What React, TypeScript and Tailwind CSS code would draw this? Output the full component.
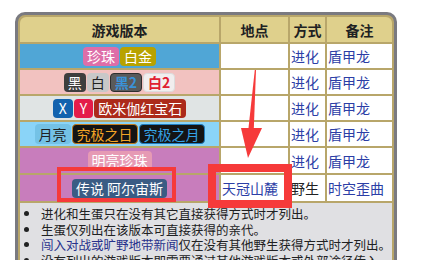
import React from 'react';

const Badge: React.FC<{ className: string; children: React.ReactNode }> = ({ className, children }) => (
  <span className={`inline-flex h-[19px] items-center rounded-[4px] leading-[19px] ${className}`}>{children}</span>
);

const Row: React.FC<{ bg: string; h?: string; children: React.ReactNode; place?: React.ReactNode; method: string; methodLink?: boolean; note: string }> = ({
  bg,
  h = 'h-[24px]',
  children,
  place,
  method,
  methodLink = true,
  note,
}) => (
  <>
    <div className={`${bg} ${h} flex items-center justify-center gap-[1px]`}>{children}</div>
    <div className="flex items-center bg-white pl-[1px] text-[#2c3ea6]">{place}</div>
    <div className={`flex items-center bg-white pl-[1px] ${methodLink ? 'text-[#2c3ea6]' : 'text-[#202122]'}`}>{method}</div>
    <div className="flex items-center bg-white pl-[1px] text-[#2c3ea6]">{note}</div>
  </>
);

export default function App() {
  return (
    <div className="relative h-[260px] w-[422px] overflow-hidden bg-white font-['Noto_Sans_CJK_SC','Noto_Sans',sans-serif] text-[14px] leading-[18px] text-[#202122]">
      <div className="ml-[15px] mt-[12px] w-[382px] rounded-[10px] border-[3px] border-[#7a7a80] bg-[#b8a66a] p-[2px]">
        <div className="grid grid-cols-[199px_67px_35px_65px] gap-[2px]">
          <div className="flex h-[25px] items-center justify-center rounded-tl-[6px] bg-[#dfd08c] font-bold">游戏版本</div>
          <div className="flex items-center justify-center bg-[#dfd08c] font-bold">地点</div>
          <div className="flex items-center justify-center bg-[#dfd08c] font-bold">方式</div>
          <div className="flex items-center justify-center rounded-tr-[6px] bg-[#dfd08c] font-bold">备注</div>

          <Row bg="bg-[#50a6d6]" method="进化" note="盾甲龙">
            <Badge className="bg-[#de6ea8] px-[4px] text-white">珍珠</Badge>
            <Badge className="bg-[#b8a200] px-[4px] text-white">白金</Badge>
          </Row>

          <Row bg="bg-[#f2c2c0]" method="进化" note="盾甲龙">
            <Badge className="bg-[#3e3e3e] px-[4px] text-white">黑</Badge>
            <Badge className="bg-[#c8c8c8] px-[4px] text-[#202122]">白</Badge>
            <Badge className="border border-[#2e2e2e] bg-[#5a5a5a] px-[4px] font-bold text-[#3a92d8]">黑2</Badge>
            <Badge className="border border-[#dcdcdc] bg-[#f1eeee] px-[4px] font-bold text-[#e02030]">白2</Badge>
          </Row>

          <Row bg="bg-[#e0e4e4]" method="进化" note="盾甲龙">
            <Badge className="bg-[#1262ae] px-[6px] text-white">X</Badge>
            <Badge className="bg-[#e41c4a] px-[6px] text-white">Y</Badge>
            <Badge className="bg-[#ac2a1a] px-[4px] text-white">欧米伽红宝石</Badge>
          </Row>

          <Row bg="bg-[#8ad4f8]" method="进化" note="盾甲龙">
            <Badge className="h-[20px] bg-[#74c2e6] px-[4px] text-[#202122]">月亮</Badge>
            <Badge className="h-[20px] border border-[#c07a1c] bg-[#141414] px-[4px] text-[#f2a426]">究极之日</Badge>
            <Badge className="h-[20px] border border-[#1f7ec0] bg-[#141414] px-[4px] text-[#34a2e4]">究极之月</Badge>
          </Row>

          <Row bg="bg-[#c87dbc]" h="h-[25px]" method="进化" note="盾甲龙">
            <Badge className="h-[17px] bg-[#e69ab4] px-[4px] text-white">明亮珍珠</Badge>
          </Row>

          <Row
            bg="bg-[#c87dbc]"
            h="h-[26px]"
            place="天冠山麓"
            method="野生"
            methodLink={false}
            note="时空歪曲"
          >
            <Badge className="bg-[#3a5c84] px-[4px] text-white">传说 阿尔宙斯</Badge>
          </Row>

          <div className="col-span-4 h-[80px] bg-[#e0e0e3] pt-[3px] text-[12.5px] leading-[15.5px]">
            <ul className="list-disc pl-[21px]">
              <li>进化和生蛋只在没有其它直接获得方式时才列出。</li>
              <li>生蛋仅列出在该版本可直接获得的亲代。</li>
              <li>
                <span className="text-[#28328c]">闯入对战或旷野地带新闻</span>仅在没有其他野生获得方式时才列出。
              </li>
              <li className="whitespace-nowrap">没有列出的游戏版本即需要通过其他游戏版本或外部途径传入</li>
            </ul>
          </div>
        </div>
      </div>

      {/* annotations */}
      <div className="absolute left-[57px] top-[167px] h-[35px] w-[119px] border-[4px] border-[#f63a3a]" />
      <div className="absolute left-[208px] top-[164px] h-[44px] w-[84px] border-[8px] border-[#f63a3a]" />
      <svg className="absolute left-0 top-0" width="422" height="260" viewBox="0 0 422 260">
        <polygon points="254.8,70 256,70 253.8,129 248.4,129" fill="#f63a3a" />
        <polygon points="241,128 262,128 248,158" fill="#f63a3a" />
      </svg>
    </div>
  );
}
